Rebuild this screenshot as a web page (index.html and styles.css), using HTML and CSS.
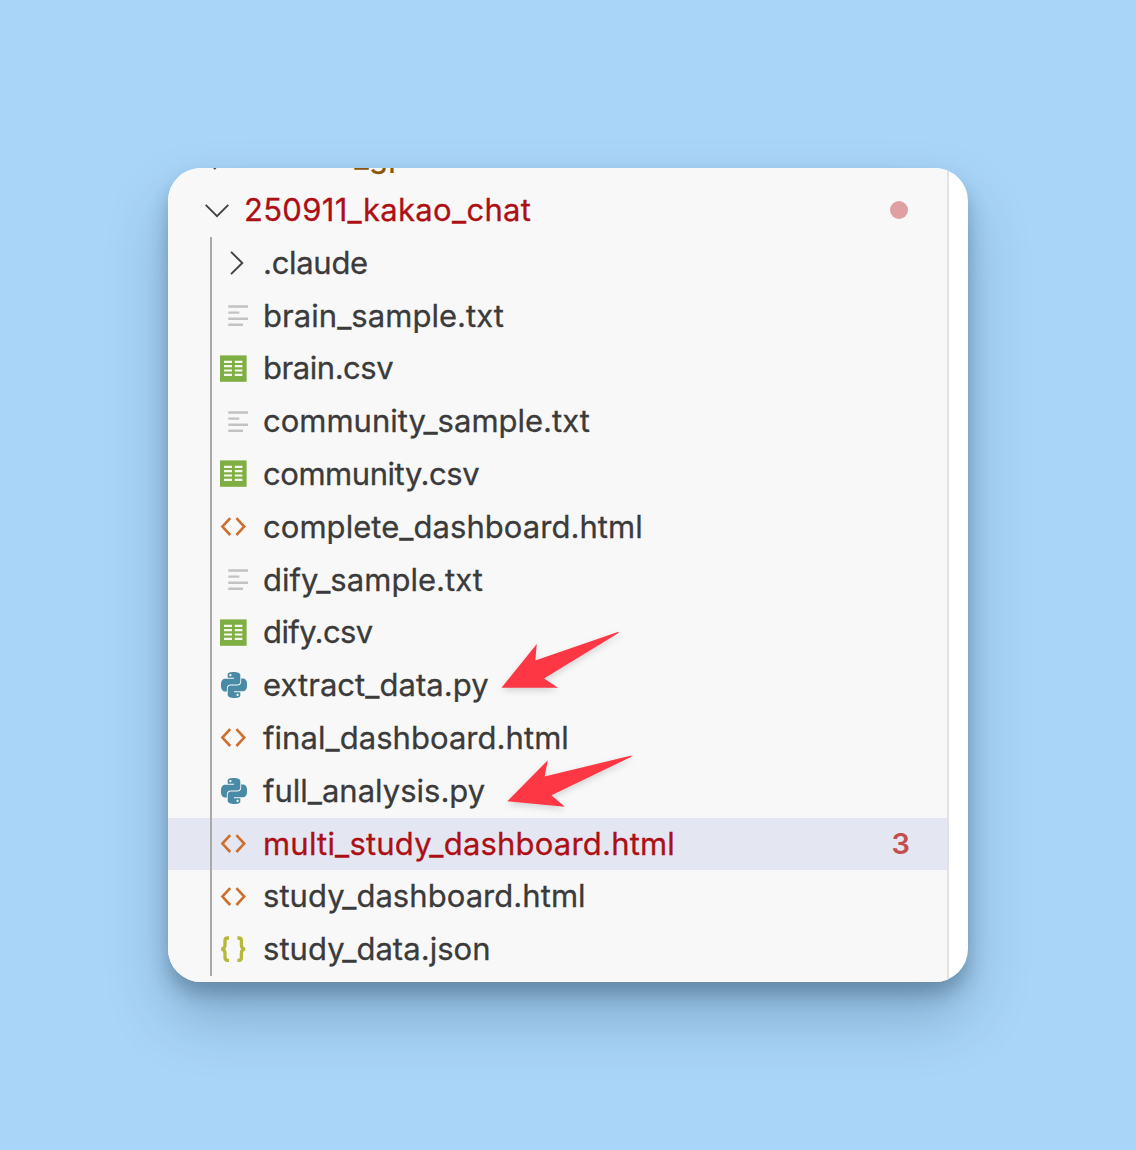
FILE: index.html
```html
<!DOCTYPE html>
<html lang="en">
<head>
<meta charset="utf-8">
<title>Explorer</title>
<link rel="stylesheet" href="styles.css">
</head>
<body>
<svg class="defs" width="0" height="0" aria-hidden="true">
  <symbol id="txt" viewBox="0 0 28 28"><path d="M8.3 4.5H28M8.3 10.6h11M8.3 16.7H28M8.3 22.8h14.7" fill="none" stroke="#c1c3c3" stroke-width="2.4"/></symbol>
  <symbol id="csv" viewBox="0 0 28 28"><path fill="#7fae42" d="M0 .4h26.6v26.4H0z"/><path d="M4 6.900h8M14.800 6.900h7.600M4 11.200h8M14.800 11.200h7.600M4 15.500h8M14.800 15.500h7.600M4 19.800h8M14.800 19.800h7.600" stroke="#f4f8ee" stroke-width="2.200"/></symbol>
  <symbol id="html" viewBox="0 0 28 28"><path d="M10.2 5.2L2.4 13.6l7.8 8.4M16.4 5.2l7.8 8.4-7.8 8.4" fill="none" stroke="#cf6f2d" stroke-width="2.6"/></symbol>
  <symbol id="json" viewBox="0 0 28 28"><path d="M9 2H7.6Q5 2 5 4.800V8.800Q5 13.200 1.200 13.200Q5 13.200 5 17.600V21.600Q5 24.400 7.600 24.400H9M17.400 2h1.400q2.600 0 2.600 2.800v4q0 4.400 3.800 4.400q-3.800 0-3.800 4.400v4q0 2.800-2.600 2.800h-1.400" fill="none" stroke="#b5b83a" stroke-width="3.300"/></symbol>
  <symbol id="py" viewBox="0 0 24 24">
    <path id="snake" fill="#498ba7" fill-rule="evenodd" d="M14.25.18l.9.2.73.26.59.3.45.32.34.34.25.34.16.33.1.3.04.26.02.2-.01.13V8.5l-.05.63-.13.55-.21.46-.26.38-.3.31-.33.25-.35.19-.35.14-.33.1-.3.07-.26.04-.21.02H8.77l-.69.05-.59.14-.5.22-.41.27-.33.32-.27.35-.2.36-.15.37-.1.35-.07.32-.04.27-.02.21v3.06H3.17l-.21-.03-.28-.07-.32-.12-.35-.18-.36-.26-.36-.36-.35-.46-.32-.59-.28-.73-.21-.88-.14-1.05-.05-1.23.06-1.22.16-1.04.24-.87.32-.71.36-.57.4-.44.42-.33.42-.24.4-.16.36-.1.32-.05.24-.01h.16l.06.01h8.16v-.83H6.18l-.01-2.75-.02-.37.05-.34.11-.31.17-.28.25-.26.31-.23.38-.2.44-.18.51-.15.58-.12.64-.1.71-.06.77-.04.84-.02 1.27.05zm-6.3 1.98l-.23.33-.08.41.08.41.23.34.33.22.41.09.41-.09.33-.22.23-.34.08-.41-.08-.41-.23-.33-.33-.22-.41-.09-.41.09z"/>
    <use href="#snake" transform="rotate(180 12 12)"/>
  </symbol>
  <symbol id="right" viewBox="0 0 28 28"><path d="M11 2.8L22.3 14 11 25.2" fill="none" stroke="#424242" stroke-width="1.9"/></symbol>
  <symbol id="down" viewBox="0 0 28 28"><path d="M2.7 8.8L14 20.1 25.3 8.8" fill="none" stroke="#424242" stroke-width="1.9"/></symbol>
</svg>
<main class="card">
  <div class="tree">
    <div class="row folder modified"><svg class="icon"><use href="#right"/></svg><span class="name wide">250901_gptoss</span></div>
    <div class="row folder error"><svg class="icon"><use href="#down"/></svg><span class="name wide">250911_kakao_chat</span><i class="dot"></i></div>
    <div class="children">
      <div class="row"><svg class="icon"><use href="#right"/></svg><span class="name snug">.claude</span></div>
      <div class="row"><svg class="icon"><use href="#txt"/></svg><span class="name">brain_sample.txt</span></div>
      <div class="row"><svg class="icon"><use href="#csv"/></svg><span class="name tight">brain.csv</span></div>
      <div class="row"><svg class="icon"><use href="#txt"/></svg><span class="name even">community_sample.txt</span></div>
      <div class="row"><svg class="icon"><use href="#csv"/></svg><span class="name tight">community.csv</span></div>
      <div class="row"><svg class="icon"><use href="#html"/></svg><span class="name">complete_dashboard.html</span></div>
      <div class="row"><svg class="icon"><use href="#txt"/></svg><span class="name">dify_sample.txt</span></div>
      <div class="row"><svg class="icon"><use href="#csv"/></svg><span class="name tighter">dify.csv</span></div>
      <div class="row"><svg class="icon snake"><use href="#py"/></svg><span class="name">extract_data.py</span></div>
      <div class="row"><svg class="icon"><use href="#html"/></svg><span class="name">final_dashboard.html</span></div>
      <div class="row"><svg class="icon snake"><use href="#py"/></svg><span class="name even">full_analysis.py</span></div>
      <div class="row error selected"><svg class="icon"><use href="#html"/></svg><span class="name roomy">multi_study_dashboard.html</span><b class="count">3</b></div>
      <div class="row"><svg class="icon"><use href="#html"/></svg><span class="name">study_dashboard.html</span></div>
      <div class="row"><svg class="icon"><use href="#json"/></svg><span class="name">study_data.json</span></div>
    </div>
  </div>
  <svg class="arrows" viewBox="0 0 160 200" width="160" height="200"><path d="M11.500 67.700L46.800 24l-1.500 16.600L128.500 11.800v1.200L54 58.600l14 9.100z" fill="#fd3743"/><path d="M17.300 181.300L57.800 140.300l-3.200 16.200L141.400 135.400v1.400L61.400 175.300 74.800 186.700z" fill="#fd3743"/></svg>
</main>
</body>
</html>
```
FILE: styles.css
```css
* { box-sizing: border-box; }
body {
  margin: 0;
  min-height: 1150px;
  padding: 168px;
  background: #a9d5f8;
  font-family: Inter, "Liberation Sans", sans-serif;
}
.defs { position: absolute; }
.card {
  position: relative;
  width: 800px;
  height: 814px;
  overflow: hidden;
  border-radius: 33px;
  background: #fff;
  box-shadow: 0 12px 18px rgba(20, 45, 65, .28), 0 34px 60px rgba(20, 50, 85, .27);
}
.tree {
  width: 781px;
  height: 814px;
  overflow: hidden;
  display: flex;
  flex-direction: column;
  justify-content: flex-end;
  padding-bottom: 6px;
  background: #f8f8f8;
  border-right: 2px solid #e2e2e2;
}
.row {
  flex: none;
  display: flex;
  align-items: center;
  height: 52.8px;
  padding: 0 37px 0 52px;
  color: #3b3b3b;
  font-size: 31px;
  white-space: nowrap;
}
.folder { padding-left: 35px; padding-right: 39px; }
.icon { flex: none; width: 28px; height: 28px; }
.snake { width: 26px; height: 26px; margin: 0 1.3px 1px .7px; }
.name {
  flex: 1;
  margin-left: 15px;
  padding-bottom: 2px;
  letter-spacing: .05px;
  -webkit-text-stroke: .3px;
}
.folder .name { margin-left: 13px; }
.wide { letter-spacing: .3px; }
.roomy { letter-spacing: .2px; }
.even { letter-spacing: 0; }
.snug { letter-spacing: -.3px; }
.tight { letter-spacing: -.45px; }
.tighter { letter-spacing: -.6px; }
.error { color: #ad0f14; }
.modified { color: #895503; }
.modified .name { padding-bottom: 4px; }
.selected { background: #e4e6f1; }
.children { position: relative; flex: none; }
.children::before {
  content: "";
  position: absolute;
  left: 42px;
  top: 0;
  bottom: 0;
  width: 2px;
  background: #a9a9a9;
}
.dot { width: 18px; height: 18px; border-radius: 50%; background: #e0a0a1; }
.count { padding-bottom: 1px; color: #c24f4c; font-size: 29px; font-weight: 600; }
.arrows {
  position: absolute;
  left: 322px;
  top: 452px;
  filter: drop-shadow(0 3px 3px rgba(0, 0, 0, .14));
}
```
